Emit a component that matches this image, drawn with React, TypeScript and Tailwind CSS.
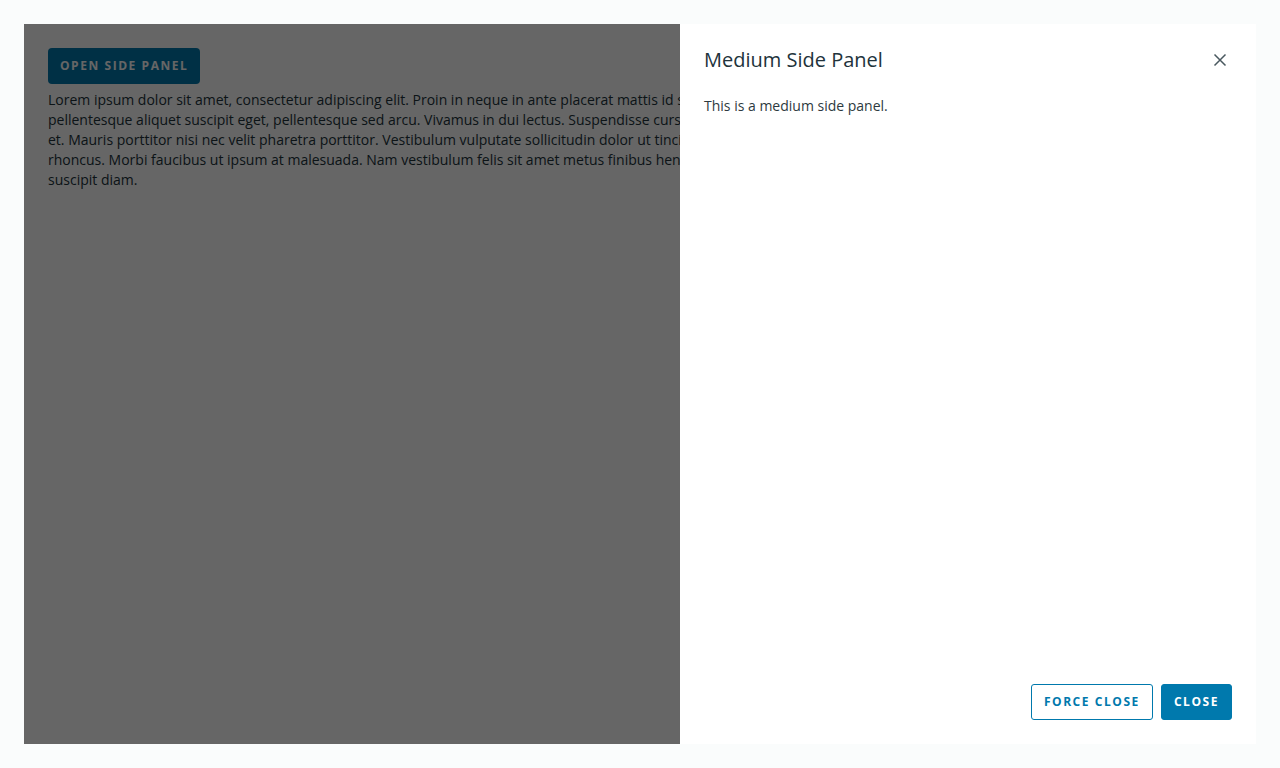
import React from 'react';

const font = { fontFamily: '"Open Sans", "Liberation Sans", sans-serif' };

function CloseIcon() {
	return (
		<svg width="16" height="16" viewBox="0 0 16 16" fill="none" stroke="#49585f" strokeWidth="1.5">
			<path d="M2.5 2.5 L13.5 13.5 M13.5 2.5 L2.5 13.5" />
		</svg>
	);
}

function SidePanel() {
	return (
		<div className="absolute top-0 right-0 bottom-0 flex w-[576px] flex-col bg-white">
			<div className="flex items-center justify-between px-6 pt-[22px]">
				<h2 className="text-[20px] leading-[28px] text-[#21333b]">Medium Side Panel</h2>
				<button className="flex h-6 w-6 items-center justify-center">
					<CloseIcon />
				</button>
			</div>
			<div className="flex-1 px-6 pt-[22px] text-[14px] leading-5 text-[#2d3a40]">
				This is a medium side panel.
			</div>
			<div className="flex justify-end gap-2 p-6">
				<button className="h-9 rounded-[3px] border border-[#0079ad] bg-white px-3 text-[12px] font-bold tracking-[0.13em] text-[#0079ad]">
					FORCE CLOSE
				</button>
				<button className="h-9 rounded-[3px] border border-[#0079ad] bg-[#0079ad] px-3 text-[12px] font-bold tracking-[0.13em] text-white">
					CLOSE
				</button>
			</div>
		</div>
	);
}

export default function App() {
	return (
		<div className="h-[768px] w-[1280px] bg-[#fafcfc] p-6" style={font}>
			<div className="relative h-[720px] overflow-hidden bg-white p-6">
				<button className="h-9 rounded-[4px] bg-[#0079ad] px-3 text-[12px] font-bold tracking-[0.13em] text-white">
					OPEN SIDE PANEL
				</button>
				<p className="mt-[6px] text-[14px] leading-5 whitespace-nowrap text-[#21333b]">
					Lorem ipsum dolor sit amet, consectetur adipiscing elit. Proin in neque in ante placerat mattis id sed quam. Proin rhoncus lacus et tempor dignissim. Vivamus sem quam,
					<br />
					pellentesque aliquet suscipit eget, pellentesque sed arcu. Vivamus in dui lectus. Suspendisse cursus est ac nisl imperdiet viverra. Aenean sagittis nibh lacus, in eleifend urna ultrices
					<br />
					et. Mauris porttitor nisi nec velit pharetra porttitor. Vestibulum vulputate sollicitudin dolor ut tincidunt. Phasellus vitae blandit felis. Nullam posuere ipsum tincidunt velit pellentesque
					<br />
					rhoncus. Morbi faucibus ut ipsum at malesuada. Nam vestibulum felis sit amet metus finibus hendrerit. Fusce faucibus odio eget ex vulputate rhoncus. Fusce nec aliquam leo, at
					<br />
					suscipit diam.
				</p>
				<div className="absolute inset-0 bg-black/60" />
				<SidePanel />
			</div>
		</div>
	);
}
